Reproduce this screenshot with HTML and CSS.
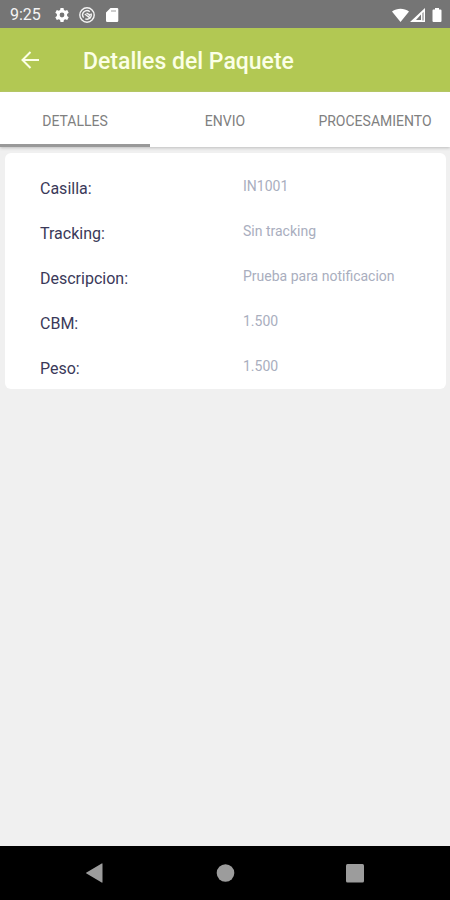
FILE: index.html
```html
<!DOCTYPE html>
<html lang="es">
<head>
<meta charset="utf-8">
<meta name="viewport" content="width=device-width, initial-scale=1">
<title>Detalles del Paquete</title>
<link rel="stylesheet" href="styles.css">
</head>
<body>
<div class="screen">
  <div class="status">
    <span class="clock">9:25</span>
    <div class="notices">
      <svg class="icon" viewBox="0 0 16 16" aria-hidden="true">
        <path class="fill" fill-rule="evenodd" d="M6.500 1h3l.4 2 1.300.8 2-.7 1.500 2.600-1.600 1.400v1.800l1.600 1.400-1.500 2.600-2-.7-1.300.8-.4 2h-3l-.4-2-1.300-.8-2 .7-1.500-2.600 1.600-1.400V7.100L1.300 5.700l1.500-2.600 2 .7L6.100 3zM8 5.600a2.400 2.400 0 1 0 0 4.800 2.400 2.400 0 0 0 0-4.800z"/>
      </svg>
      <svg class="icon" viewBox="0 0 16 16" aria-hidden="true">
        <circle class="line" cx="8" cy="8" r="7.200"/>
        <path class="line" d="M4.600 10.600a4.300 4.300 0 0 1 6.200-5.900M12 6.500a4.300 4.300 0 0 1-5.700 5.400M5.800 7l5.700 4.500M7.500 6.200l3.200 1.600-1 1.500"/>
      </svg>
      <svg class="icon" viewBox="0 0 16 16" aria-hidden="true">
        <path class="fill" fill-rule="evenodd" d="M6.500 1H13a1.300 1.300 0 0 1 1.300 1.300v11.400A1.300 1.300 0 0 1 13 15H3.300A1.300 1.300 0 0 1 2 13.700V5.500z"/>
        <path class="slot" d="M7 3.500h5v1H7z"/>
      </svg>
    </div>
    <svg class="signals" viewBox="0 0 50 16" aria-hidden="true">
      <path class="fill" d="M0 4.500C5 .8 12 .8 17 4.500L8.500 15z"/>
      <path class="fill" fill-rule="evenodd" d="M33 1v14H18zM29 7.500 24 13h5zM30.500 6v7.500h1V5z"/>
      <path class="fill" d="M41.500 2.500H43V1h4v1.500h1.500a1 1 0 0 1 1 1V14a1 1 0 0 1-1 1h-7a1 1 0 0 1-1-1V3.500a1 1 0 0 1 1-1z"/>
    </svg>
  </div>

  <header class="appbar">
    <button class="back" type="button" aria-label="Volver">
      <svg class="arrow" viewBox="0 0 20 20" aria-hidden="true"><path d="M19 10H2.500M10.500 2 2.500 10l8 8"/></svg>
    </button>
    <h1 class="title">Detalles del Paquete</h1>
  </header>

  <div class="tabs" role="tablist">
    <button class="tab tab-active" type="button" role="tab" aria-selected="true">DETALLES</button>
    <button class="tab" type="button" role="tab" aria-selected="false">ENVIO</button>
    <button class="tab" type="button" role="tab" aria-selected="false">PROCESAMIENTO</button>
  </div>

  <main class="content">
    <dl class="card">
      <div class="row"><dt>Casilla:</dt><dd>IN1001</dd></div>
      <div class="row"><dt>Tracking:</dt><dd>Sin tracking</dd></div>
      <div class="row"><dt>Descripcion:</dt><dd>Prueba para notificacion</dd></div>
      <div class="row"><dt>CBM:</dt><dd>1.500</dd></div>
      <div class="row"><dt>Peso:</dt><dd>1.500</dd></div>
    </dl>
  </main>

  <nav class="navbar">
    <button class="nav" type="button" aria-label="Atrás"><svg class="nav-icon" viewBox="0 0 20 20" aria-hidden="true"><path d="M17.500.800v18.400a.5.500 0 0 1-.8.300L1.500 10.600a.7.700 0 0 1 0-1.200L16.700.500a.5.500 0 0 1 .8.300z"/></svg></button>
    <button class="nav" type="button" aria-label="Inicio"><svg class="nav-icon" viewBox="0 0 20 20" aria-hidden="true"><circle cx="10.500" cy="10" r="8.800"/></svg></button>
    <button class="nav" type="button" aria-label="Recientes"><svg class="nav-icon" viewBox="0 0 20 20" aria-hidden="true"><rect x="1" y="1" width="18" height="18.500" rx="1.500"/></svg></button>
  </nav>
</div>
</body>
</html>
```
FILE: styles.css
```css
* {
  box-sizing: border-box;
}

body {
  margin: 0;
  font-family: Roboto, "Liberation Sans", sans-serif;
  background: #f0f0f0;
}

button {
  margin: 0;
  padding: 0;
  border: 0;
  background: none;
  font: inherit;
}

svg {
  display: block;
}

.screen {
  display: flex;
  flex-direction: column;
  min-height: 100vh;
}

.status {
  display: flex;
  align-items: center;
  height: 28px;
  padding: 2px 8px 0 10px;
  background: #757575;
  color: #f4f4f4;
}

.clock {
  font-size: 16px;
  line-height: 26px;
}

.notices {
  display: flex;
  flex: 1;
  gap: 9px;
  margin-left: 13px;
}

.icon {
  width: 16px;
  height: 16px;
}

.signals {
  width: 50px;
  height: 16px;
}

.fill {
  fill: #fff;
}

.slot {
  fill: #9a9a9a;
}

.line {
  fill: none;
  stroke: #f4f4f4;
  stroke-width: 1.4;
}

.appbar {
  display: flex;
  align-items: center;
  height: 64px;
  padding: 0 20px;
  background: #b2c853;
}

.back {
  width: 63px;
}

.arrow {
  width: 20px;
  height: 20px;
  fill: none;
  stroke: #fbffe6;
  stroke-width: 2;
}

.title {
  margin: 0;
  padding-top: 4px;
  color: #fbffe6;
  font-size: 23px;
  font-weight: 500;
  line-height: 32px;
}

.tabs {
  display: grid;
  grid-template-columns: repeat(3, 1fr);
  height: 55px;
  background: #fff;
  box-shadow: 0 1px 3px #bdbdbd;
}

.tab {
  border-bottom: 3px solid transparent;
  padding-top: 5px;
  color: #808080;
  font-size: 14px;
}

.tab-active {
  border-bottom-color: #999;
}

.content {
  flex: 1;
  padding: 6px 4px 6px 5px;
}

.card {
  margin: 0;
  padding: 13px 0 0 35px;
  border-radius: 6px;
  background: #fff;
}

.row {
  display: grid;
  grid-template-columns: 1fr 1fr;
  height: 45px;
}

.row:last-child {
  height: 43px;
}

.row dt {
  color: #3a3959;
  font-size: 16px;
  line-height: 45px;
}

.row dd {
  margin: 0;
  color: #a9aebe;
  font-size: 14px;
  line-height: 41px;
}

.navbar {
  display: flex;
  height: 54px;
  padding: 0 30px;
  background: #000;
}

.nav {
  display: flex;
  flex: 1;
  align-items: center;
  justify-content: center;
}

.nav-icon {
  width: 20px;
  height: 20px;
  fill: #9c9c9c;
}
```
